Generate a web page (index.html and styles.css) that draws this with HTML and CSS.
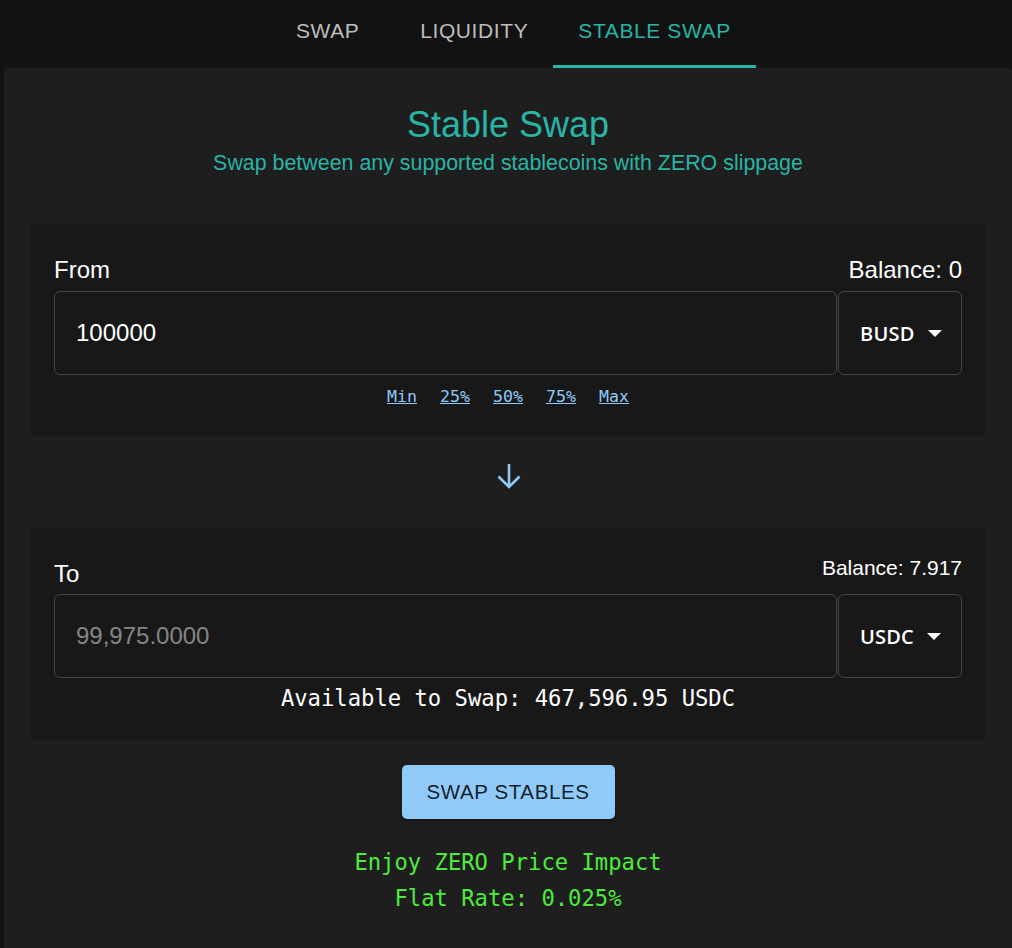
FILE: index.html
```html
<!DOCTYPE html>
<html lang="en">
<head>
<meta charset="utf-8">
<title>Stable Swap</title>
<link rel="stylesheet" href="styles.css">
</head>
<body>
<nav class="tabs">
  <a class="tab">SWAP</a>
  <a class="tab">LIQUIDITY</a>
  <a class="tab active">STABLE SWAP</a>
</nav>
<main class="card">
  <h1 class="title">Stable Swap</h1>
  <p class="subtitle">Swap between any supported stablecoins with ZERO slippage</p>

  <section class="box box-from">
    <div class="row-labels">
      <span class="label">From</span>
      <span class="balance">Balance: 0</span>
    </div>
    <div class="field">
      <div class="input">100000</div>
      <div class="select">BUSD <span class="caret"></span></div>
    </div>
    <div class="quick">
      <a>Min</a><a>25%</a><a>50%</a><a>75%</a><a>Max</a>
    </div>
  </section>

  <div class="arrow">
    <svg width="26" height="28" viewBox="0 0 26 28"><path d="M13 2 V25 M2.5 14.5 L13 25 L23.5 14.5" fill="none" stroke="#90caf9" stroke-width="2.6"/></svg>
  </div>

  <section class="box box-to">
    <div class="row-labels to">
      <span class="label label-to">To</span>
      <span class="balance small">Balance: 7.917</span>
    </div>
    <div class="field">
      <div class="input muted">99,975.0000</div>
      <div class="select">USDC <span class="caret"></span></div>
    </div>
    <div class="available">Available to Swap: 467,596.95 USDC</div>
  </section>

  <div class="actions">
    <button class="btn">SWAP STABLES</button>
  </div>

  <div class="note">
    <div>Enjoy ZERO Price Impact</div>
    <div>Flat Rate: 0.025%</div>
  </div>
</main>
</body>
</html>
```

FILE: styles.css
```css
* { box-sizing: border-box; }
html, body { margin: 0; padding: 0; }
body {
  background: #121212;
  color: #fff;
  font-family: "Liberation Sans", Arial, sans-serif;
  height: 948px;
  overflow: hidden;
}
.tabs {
  display: flex;
  justify-content: center;
  height: 68px;
  padding-left: 4px;
}
.tab {
  min-width: 135px;
  padding: 20px 25px 0;
  height: 68px;
  font-size: 21px;
  line-height: 22px;
  letter-spacing: 0.6px;
  color: #bdbdbd;
  text-align: center;
  border-bottom: 3px solid transparent;
}
.tab.active {
  color: #28b4a6;
  border-bottom-color: #28b4a6;
}
.card {
  margin-left: 4px;
  background: #1e1e1e;
  border-radius: 4px 4px 0 0;
  padding: 36px 25px 40px;
  min-height: 880px;
}
.title {
  margin: 0;
  text-align: center;
  font-weight: 400;
  font-size: 36px;
  line-height: 42px;
  color: #28b4a6;
}
.subtitle {
  margin: 4px 0 0;
  text-align: center;
  font-size: 21.4px;
  line-height: 26px;
  color: #28b4a6;
}
.box {
  background: #181818;
  border: 1px solid #1c1c1c;
  border-radius: 6px;
  padding: 0 24px;
}
.box-from {
  margin-top: 48px;
  padding-top: 31px;
  padding-bottom: 29px;
}
.row-labels {
  display: flex;
  justify-content: space-between;
  align-items: center;
  height: 28px;
  margin-bottom: 7px;
}
.label, .balance {
  font-size: 24px;
  line-height: 28px;
}
.row-labels.to {
  align-items: flex-start;
  height: 34px;
  margin-bottom: 3px;
}
.label-to { line-height: 34px; }
.balance.small { font-size: 21px; line-height: 22px; }
.field {
  display: flex;
  height: 84px;
}
.input {
  flex: 1;
  border: 1px solid #454545;
  border-radius: 6px;
  display: flex;
  align-items: center;
  padding-left: 21px;
  font-size: 24px;
  color: #fff;
}
.input.muted { color: #858585; }
.select {
  width: 124px;
  margin-left: 1px;
  border: 1px solid #454545;
  border-radius: 6px;
  display: flex;
  align-items: center;
  padding-left: 21px;
  font-size: 20px;
  font-weight: 600;
  font-family: "Open Sans", "Liberation Sans", sans-serif;
  letter-spacing: 0.2px;
}
.caret {
  margin-left: 13px;
  width: 0;
  height: 0;
  border-left: 7px solid transparent;
  border-right: 7px solid transparent;
  border-top: 7px solid #fff;
}
.quick {
  display: flex;
  justify-content: center;
  gap: 23px;
  margin-top: 12px;
  font-family: "DejaVu Sans Mono", monospace;
  font-size: 16.6px;
  line-height: 20px;
}
.quick a {
  color: #90caf9;
  text-decoration: underline;
}
.arrow {
  display: flex;
  justify-content: center;
  padding: 25px 0 0;
  height: 90px;
  margin-left: 2px;
}
.box-to {
  padding-top: 29px;
  padding-bottom: 29px;
}
.available {
  text-align: center;
  margin-top: 7px;
  font-family: "DejaVu Sans Mono", monospace;
  font-size: 22.2px;
  line-height: 26px;
  color: #fff;
}
.actions {
  display: flex;
  justify-content: center;
  margin-top: 24px;
}
.btn {
  width: 213px;
  height: 54px;
  border: none;
  border-radius: 5px;
  background: #90caf9;
  color: rgba(0,0,0,0.87);
  font-family: "Liberation Sans", Arial, sans-serif;
  font-size: 20.5px;
  letter-spacing: 0.6px;
  box-shadow: 0 3px 1px -2px rgba(0,0,0,0.2), 0 2px 2px 0 rgba(0,0,0,0.14), 0 1px 5px 0 rgba(0,0,0,0.12);
}
.note {
  margin-top: 25px;
  text-align: center;
  font-family: "DejaVu Sans Mono", monospace;
  font-size: 22.2px;
  line-height: 36px;
  color: #4ceb3c;
}
```
